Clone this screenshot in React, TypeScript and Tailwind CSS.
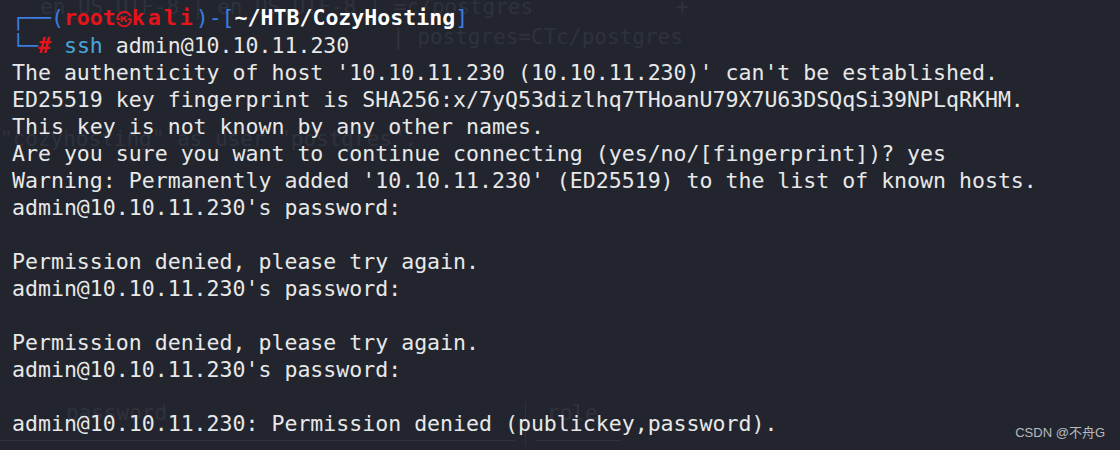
import React from "react";

const mono = "font-['DejaVu_Sans_Mono','Liberation_Mono',monospace]";

const lines = [
  "The authenticity of host '10.10.11.230 (10.10.11.230)' can't be established.",
  "ED25519 key fingerprint is SHA256:x/7yQ53dizlhq7THoanU79X7U63DSQqSi39NPLqRKHM.",
  "This key is not known by any other names.",
  "Are you sure you want to continue connecting (yes/no/[fingerprint])? yes",
  "Warning: Permanently added '10.10.11.230' (ED25519) to the list of known hosts.",
  "admin@10.10.11.230's password: ",
  "",
  "Permission denied, please try again.",
  "admin@10.10.11.230's password: ",
  "",
  "Permission denied, please try again.",
  "admin@10.10.11.230's password: ",
  "",
  "admin@10.10.11.230: Permission denied (publickey,password).",
];

// faint text from the window behind the translucent terminal
const Ghost = () => (
  <div className={`absolute inset-0 text-[#2f323c] text-[21px] ${mono}`}>
    <span className="absolute left-[40px] top-[-8px]">en_US.UTF-8 | en_US.UTF-8 | =c/postgres</span>
    <span className="absolute left-[676px] top-[-8px]">+</span>
    <span className="absolute left-[392px] top-[22px]">| postgres=CTc/postgres</span>
    <span className="absolute left-[0px] top-[124px]">"cozyhosting" as user "postgres".</span>
    <span className="absolute left-[66px] top-[398px]">password</span>
    <span className="absolute left-[547px] top-[398px]">role</span>
    <div className="absolute left-[525px] top-[402px] w-px h-[44px] bg-[#2f323c]" />
    <div className="absolute left-0 top-[440px] w-[515px] h-px bg-[#2f323c]" />
    <div className="absolute left-[535px] top-[440px] w-[86px] h-px bg-[#2f323c]" />
  </div>
);

export default function App() {
  return (
    <div className="relative w-[1120px] h-[450px] overflow-hidden bg-[#22252e]">
      <Ghost />
      <div className={`relative flex flex-col pt-[4px] pl-[12px] text-[21.55px] leading-[27px] text-[#e8e8e8] whitespace-pre ${mono}`}>
        <div>
          <span className="text-[#3b7de3]">┌──(</span>
          <span className="font-bold text-[#e6141a]">root</span>
          <span className="inline-block w-[16px] text-center font-bold text-[#e6141a] text-[16px] font-['Noto_Sans_CJK_SC',sans-serif]">㉿</span>
          <span className="font-bold text-[#e6141a] tracking-[3px]">kali</span>
          <span className="text-[#3b7de3]">)-[</span>
          <span className="font-bold text-white">~/HTB/CozyHosting</span>
          <span className="text-[#3b7de3]">]</span>
        </div>
        <div>
          <span className="text-[#3b7de3]">└─</span>
          <span className="font-bold text-[#e6141a]">#</span>
          <span className="text-[#4aa6dc]"> ssh</span>
          <span> admin@10.10.11.230</span>
        </div>
        {lines.map((l, i) => (
          <div key={i} className="h-[27px]">
            {l}
          </div>
        ))}
      </div>
      <span className="absolute right-[15px] bottom-[8px] text-[13px] text-[#b9bbbf] font-['Liberation_Sans','Noto_Sans_CJK_SC',sans-serif]">
        CSDN @不舟G
      </span>
    </div>
  );
}
